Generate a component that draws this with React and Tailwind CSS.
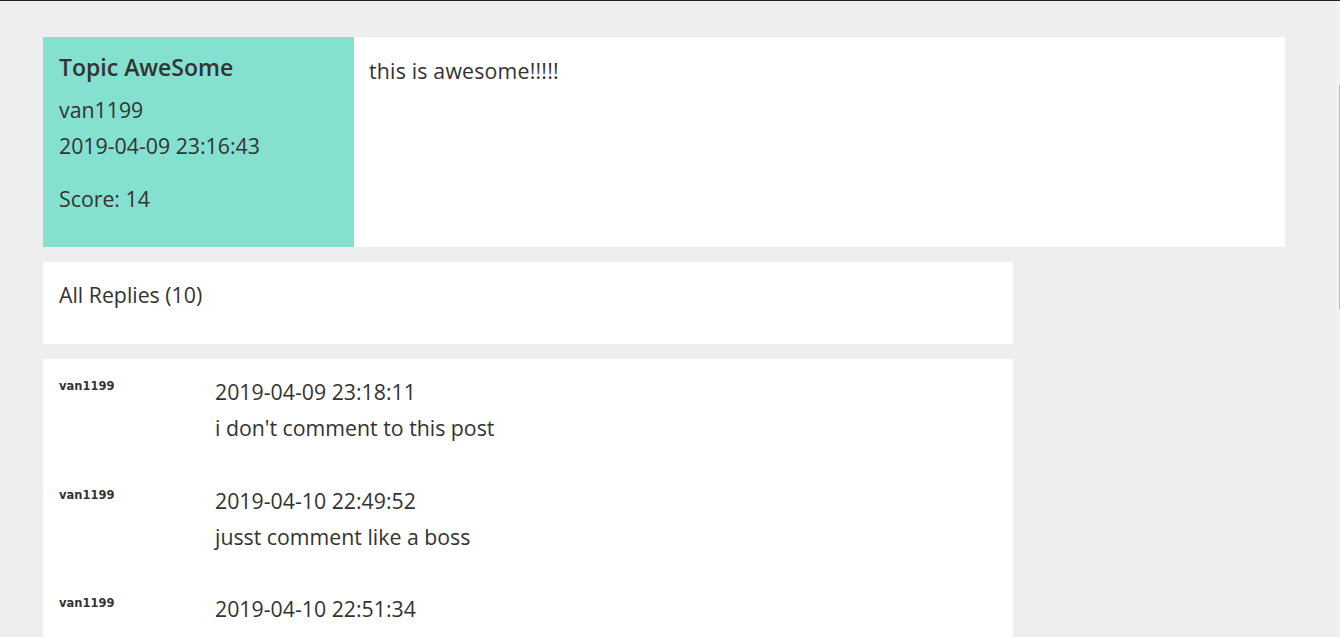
import React from "react";

const replies = [
  { user: "van1199", date: "2019-04-09 23:18:11", text: "i don't comment to this post" },
  { user: "van1199", date: "2019-04-10 22:49:52", text: "jusst comment like a boss" },
  { user: "van1199", date: "2019-04-10 22:51:34", text: "that's cool" },
];

export default function App() {
  const font = { fontFamily: '"Open Sans", "Noto Sans", sans-serif' };
  return (
    <div
      className="relative min-h-screen h-[637px] overflow-hidden bg-[#eeeeee] border-t border-[#222222] text-[#333333]"
      style={font}
    >
      <div className="ml-[43px] w-[1242px] pt-[36px] flex flex-col gap-[15px]">
        {/* Topic */}
        <div className="flex h-[210px] bg-white">
          <div className="w-[311px] shrink-0 bg-[#84e0cf] pl-4 pt-[12px]">
            <div className="text-[23px] leading-[36px] font-semibold">Topic AweSome</div>
            <div className="mt-[7px] text-[21.3px] leading-[36.3px]">van1199</div>
            <div className="text-[21.3px] leading-[36.3px]">2019-04-09 23:16:43</div>
            <div className="mt-[16px] text-[21.3px] leading-[36.3px]">Score: 14</div>
          </div>
          <div className="flex-1 pl-[15px] pt-[16px] text-[21.3px] leading-[36.3px] tracking-[0.2px]">
            this is awesome!!!!!
          </div>
        </div>

        {/* Header */}
        <div className="w-[970px] h-[82px] bg-white pl-4 pt-[15px] text-[21.3px] leading-[36.3px]">
          All Replies (10)
        </div>

        {/* Replies */}
        <div className="w-[970px] bg-white pt-[15px] flex flex-col gap-[36px]">
          {replies.map((r, i) => (
            <div key={i} className="flex items-start pl-4">
              <div
                className="w-[156px] shrink-0 pt-[4px] text-[11.5px] leading-4 font-bold"
                style={{ fontFamily: '"DejaVu Sans", Verdana, sans-serif' }}
              >
                {r.user}
              </div>
              <div className="text-[21.3px] leading-[36.3px]">
                <div>{r.date}</div>
                <div>{r.text}</div>
              </div>
            </div>
          ))}
        </div>
      </div>

      {/* scrollbar */}
      <div className="absolute right-0 top-0 bottom-0 w-[4px] bg-[#f1f1f1]">
        <div className="absolute right-0 top-[84px] h-[225px] w-[1px] bg-[#bdbdbd]" />
      </div>
    </div>
  );
}
